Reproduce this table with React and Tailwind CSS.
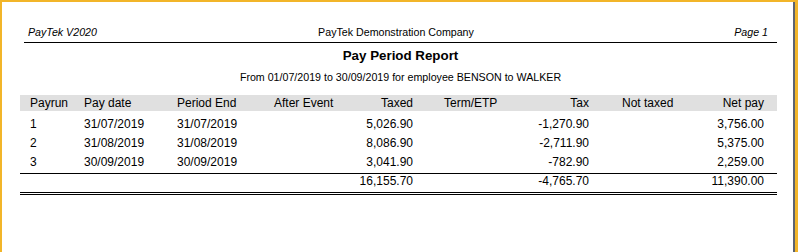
const cols = "grid grid-cols-[64px_93px_97px_66px_73px_107px_69px_111px_64px] pr-[13px]";

const rows = [
  ["1", "31/07/2019", "31/07/2019", "", "5,026.90", "", "-1,270.90", "", "3,756.00"],
  ["2", "31/08/2019", "31/08/2019", "", "8,086.90", "", "-2,711.90", "", "5,375.00"],
  ["3", "30/09/2019", "30/09/2019", "", "3,041.90", "", "-782.90", "", "2,259.00"],
];

function Row({ cells, className = "" }) {
  return (
    <div className={`${cols} ${className}`}>
      <div className="pl-[10px]">{cells[0]}</div>
      <div>{cells[1]}</div>
      <div>{cells[2]}</div>
      <div>{cells[3]}</div>
      <div className="text-right">{cells[4]}</div>
      <div className="pl-[31px]">{cells[5]}</div>
      <div className="text-right">{cells[6]}</div>
      <div className="pl-[33px]">{cells[7]}</div>
      <div className="text-right">{cells[8]}</div>
    </div>
  );
}

export default function App() {
  return (
    <div className="flex h-[252px] w-[798px] overflow-hidden border-l-2 border-r-[3px] border-t-2 border-[#f2b529] bg-white font-['Liberation_Sans',Arial,sans-serif] text-black">
      <div className="flex-1 border-r-2 border-[#5d6470] pt-[23px]">
        {/* page header */}
        <div className="ml-[22px] flex w-[753px] border-b border-black pb-[3px] pl-[4px] pr-[9px] text-[10.67px] leading-[14px]">
          <div className="w-[118px] italic">PayTek V2020</div>
          <div className="flex-1 text-center">PayTek Demonstration Company</div>
          <div className="w-[122px] text-right italic">Page 1</div>
        </div>

        <div className="ml-[22px] w-[753px] text-center">
          <div className="mt-[5px] text-[13.33px] font-bold leading-[16px]">Pay Period Report</div>
          <div className="mt-[6px] text-[10.67px] leading-[14px]">
            From 01/07/2019 to 30/09/2019 for employee BENSON to WALKER
          </div>
        </div>

        {/* table */}
        <div className="ml-[18px] mt-[11px] w-[757px] text-[12px]">
          <Row
            className="h-[16px] bg-[#e0e0e0] leading-[16px]"
            cells={["Payrun", "Pay date", "Period End", "After Event", "Taxed", "Term/ETP", "Tax", "Not taxed", "Net pay"]}
          />
          <div className="mt-[4px] border-b border-black pb-[1px] leading-[19px]">
            {rows.map((r) => (
              <Row key={r[0]} cells={r} />
            ))}
          </div>
          <div className="border-b-[3px] border-double border-black pb-[3px] leading-[15px]">
            <Row cells={["", "", "", "", "16,155.70", "", "-4,765.70", "", "11,390.00"]} />
          </div>
        </div>
      </div>
    </div>
  );
}
